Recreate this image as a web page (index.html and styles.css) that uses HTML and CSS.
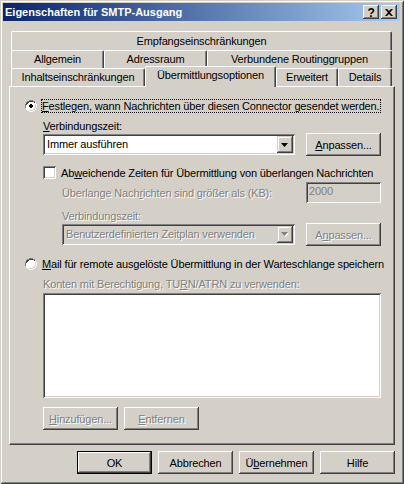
FILE: index.html
```html
<!DOCTYPE html>
<html>
<head>
<meta charset="utf-8">
<link rel="stylesheet" href="styles.css">
</head>
<body>
<div class="window">
  <div class="titlebar">
    <span class="title">Eigenschaften für SMTP-Ausgang</span>
    <div class="tb-btns">
      <span class="tb-btn help">?</span>
      <span class="tb-btn"><svg width="8" height="7" viewBox="0 0 8 7"><path d="M0 0h2l2 2 2-2h2L5 3.5 8 7H6L4 5 2 7H0l3-3.5z" fill="#000"/></svg></span>
    </div>
  </div>
  <div class="client">
    <div class="tabs">
      <div class="tabrow r1">
        <div class="tab w-empf">Empfangseinschränkungen</div>
      </div>
      <div class="tabrow">
        <div class="tab w-allg">Allgemein</div>
        <div class="tab w-adr">Adressraum</div>
        <div class="tab w-verb">Verbundene Routinggruppen</div>
      </div>
      <div class="tabrow">
        <div class="tab w-inh">Inhaltseinschränkungen</div>
        <div class="tab sel w-uebm">Übermittlungsoptionen</div>
        <div class="tab w-erw">Erweitert</div>
        <div class="tab w-det">Details</div>
      </div>
    </div>
    <div class="panel">
      <div class="optrow r-first">
        <span class="radio"><svg width="12" height="12" viewBox="0 0 12 12"><path d="M4 0h4v1h2v1h1v2h1v4h-1v2h-1v1H8v1H4v-1H2v-1H1V8H0V4h1V2h1V1h2z" fill="#fff"/><path d="M4 0h4v1h2v1h-2v-1h-4v1h-2v2h-1v4h-1v-4h1v-2h1v-1h2z" fill="#808080"/><path d="M4 1h4v1h2v1h-1v-1h-1v-0H4v1H3v1H2v1H1V3h1V2h2z" fill="#404040"/><path d="M11 4h1v4h-1v2h-1v1H8v1H4v-1h4v-1h2V8h1z" fill="#fff"/><path d="M10 4h1v4h-1v2H8v1H4v-1h4V9h1V8h1z" fill="#D4D0C8"/><rect x="5" y="4" width="2" height="4" fill="#000"/><rect x="4" y="5" width="4" height="2" fill="#000"/></svg></span>
        <span class="focus"><u>F</u>estlegen, wann Nachrichten über diesen Connector gesendet werden.</span>
      </div>
      <div class="group">
        <div class="lbl l-verb"><u>V</u>erbindungszeit:</div>
        <div class="fieldrow">
          <div class="combo c1">
            <span class="ctext">Immer ausführen</span>
            <span class="cbtn"><svg width="7" height="4" viewBox="0 0 7 4"><path d="M0 0h7L3.5 4z" fill="#000"/></svg></span>
          </div>
          <div class="btn"><span><u>A</u>npassen...</span></div>
        </div>
        <div class="chkrow">
          <span class="check"></span>
          <span>Ab<u>w</u>eichende Zeiten für Übermittlung von überlangen Nachrichten</span>
        </div>
        <div class="sub">
          <div class="fieldrow sizerow">
            <span class="dis grow">Überlange Nach<u>r</u>ichten sind größer als (KB):</span>
            <div class="edit">2000</div>
          </div>
          <div class="lbl dis l-verb2">Verbindungszeit:</div>
          <div class="fieldrow">
            <div class="combo c2 disabled">
              <span class="ctext dis">Benutzerdefinierten Zeitplan verwenden</span>
              <span class="cbtn"><svg width="8" height="5" viewBox="0 0 8 5"><path d="M1 1h7L4.5 5z" fill="#fff"/><path d="M0 0h7L3.5 4z" fill="#808080"/></svg></span>
            </div>
            <div class="btn"><span class="dis">A<u>n</u>passen...</span></div>
          </div>
        </div>
      </div>
      <div class="optrow r-second">
        <span class="radio"><svg width="12" height="12" viewBox="0 0 12 12"><path d="M4 0h4v1h2v1h1v2h1v4h-1v2h-1v1H8v1H4v-1H2v-1H1V8H0V4h1V2h1V1h2z" fill="#fff"/><path d="M4 0h4v1h2v1h-2v-1h-4v1h-2v2h-1v4h-1v-4h1v-2h1v-1h2z" fill="#808080"/><path d="M4 1h4v1h2v1h-1v-1h-1v-0H4v1H3v1H2v1H1V3h1V2h2z" fill="#404040"/><path d="M11 4h1v4h-1v2h-1v1H8v1H4v-1h4v-1h2V8h1z" fill="#fff"/><path d="M10 4h1v4h-1v2H8v1H4v-1h4V9h1V8h1z" fill="#D4D0C8"/></svg></span>
        <span class="nofocus"><u>M</u>ail für remote ausgelöste Übermittlung in der Warteschlange speichern</span>
      </div>
      <div class="group">
        <div class="lbl dis l-konten">Konten mit Berechtigung, TU<u>R</u>N/ATRN zu verwenden:</div>
        <div class="listbox"></div>
        <div class="btnrow">
          <div class="btn"><span class="dis"><u>H</u>inzufügen...</span></div>
          <div class="btn"><span class="dis"><u>E</u>ntfernen</span></div>
        </div>
      </div>
    </div>
    <div class="footer">
      <div class="btn default"><span>OK</span></div>
      <div class="btn"><span>Abbrechen</span></div>
      <div class="btn"><span>Ü<u>b</u>ernehmen</span></div>
      <div class="btn"><span>Hilfe</span></div>
    </div>
  </div>
</div>
</body>
</html>
```
FILE: styles.css
```css
* { box-sizing: border-box; }
html, body { margin: 0; padding: 0; }
body {
  font-family: "Liberation Sans", Arial, sans-serif;
  font-size: 11px;
  letter-spacing: -0.15px;
  color: #000;
  background: #D4D0C8;
}
u { text-decoration: underline; text-underline-offset: 1px; }

.window {
  width: 404px;
  height: 484px;
  background: #D4D0C8;
  padding: 3px 4px 4px 3px;
  box-shadow: inset 1px 1px #D4D0C8, inset -1px -1px #404040, inset 2px 2px #fff, inset -2px -2px #808080;
  display: flex;
  flex-direction: column;
}

.titlebar {
  height: 18px;
  background: linear-gradient(to right, #0A246A, #A6CAF0);
  display: flex;
  align-items: center;
  padding: 0 3px 0 2px;
}
.title {
  flex: 1;
  color: #fff;
  font-weight: bold;
  font-size: 11px;
  letter-spacing: 0;
  line-height: 14px;
}
.tb-btns { display: flex; gap: 2px; }
.tb-btn {
  width: 16px;
  height: 14px;
  background: #D4D0C8;
  box-shadow: inset -1px -1px #404040, inset 1px 1px #fff, inset -2px -2px #808080;
  display: flex;
  align-items: center;
  justify-content: center;
}
.tb-btn.help {
  font-weight: bold;
  font-size: 12px;
  line-height: 12px;
  padding-top: 1px;
}

.client {
  flex: 1;
  padding: 10px 5px 0 6px;
  display: flex;
  flex-direction: column;
}

.tabs { margin: 0 2px; }
.tabrow { display: flex; height: 18px; }
.tabrow.r1 { height: 19px; }
.tab {
  height: 18px;
  background: #D4D0C8;
  border-top: 1px solid #fff;
  border-left: 1px solid #fff;
  border-right: 1px solid #404040;
  border-radius: 2px 2px 0 0;
  box-shadow: inset -1px 0 #808080;
  text-align: center;
  line-height: 16px;
  white-space: nowrap;
}
.r1 .tab { height: 19px; padding-top: 1px; }
.tab.sel {
  position: relative;
  z-index: 1;
  height: 21px;
  margin-top: -2px;
}
.w-empf { width: 381px; }
.w-allg { width: 93px; }
.w-adr { width: 103px; }
.w-verb { width: 185px; }
.w-inh { width: 134px; }
.w-uebm { width: 131px; }
.w-erw { width: 62px; }
.w-det { width: 54px; }

.panel {
  height: 359px;
  border-top: 1px solid #fff;
  border-left: 1px solid #fff;
  border-right: 1px solid #404040;
  border-bottom: 1px solid #404040;
  box-shadow: inset -1px -1px #808080;
  padding: 12px 0 0 15px;
}

.optrow {
  display: flex;
  align-items: center;
  height: 14px;
}
.radio { width: 12px; height: 12px; display: block; }
.radio svg { display: block; }
.focus {
  margin-left: 4px;
  border: 1px dotted #000;
  padding: 0 1px 0 0;
  line-height: 12px;
  white-space: nowrap;
}
.nofocus {
  margin-left: 5px;
  line-height: 12px;
  white-space: nowrap;
}
.r-second { margin-top: 11px; }

.group { margin-left: 18px; }
.lbl { line-height: 13px; height: 13px; white-space: nowrap; }
.l-verb { margin-top: 7px; }
.l-verb2 { margin-top: 7px; }
.l-konten { margin-top: 7px; }

.fieldrow {
  display: flex;
  align-items: center;
  height: 23px;
  width: 338px;
}
.sizerow { height: 21px; margin-top: 3px; width: 319px; }
.grow { flex: 1; white-space: nowrap; }

.combo {
  height: 21px;
  background: #fff;
  box-shadow: inset 1px 1px #808080, inset -1px -1px #fff, inset 2px 2px #404040, inset -2px -2px #D4D0C8;
  display: flex;
  align-items: center;
  padding: 2px;
  margin-right: 11px;
}
.combo.c1 { width: 252px; }
.combo.c2 { width: 233px; }
.combo.disabled { background: #D4D0C8; }
.ctext { flex: 1; padding-left: 2px; white-space: nowrap; line-height: 13px; }
.cbtn {
  width: 16px;
  height: 17px;
  background: #D4D0C8;
  box-shadow: inset -1px -1px #404040, inset 1px 1px #D4D0C8, inset -2px -2px #808080, inset 2px 2px #fff;
  display: flex;
  align-items: center;
  justify-content: center;
}
.cbtn svg { display: block; margin-left: -1px; }

.btn {
  width: 75px;
  height: 23px;
  background: #D4D0C8;
  box-shadow: inset -1px -1px #404040, inset 1px 1px #fff, inset -2px -2px #808080, inset 2px 2px #D4D0C8;
  display: flex;
  align-items: center;
  justify-content: center;
  white-space: nowrap;
  flex: none;
}
.btn.default {
  border: 1px solid #000;
  box-shadow: inset -1px -1px #404040, inset 1px 1px #fff, inset -2px -2px #808080;
}

.dis { color: #808080; text-shadow: 1px 1px 0 #fff; }

.chkrow {
  display: flex;
  align-items: center;
  height: 13px;
  margin-top: 10px;
  white-space: nowrap;
}
.check {
  width: 13px;
  height: 13px;
  background: #fff;
  box-shadow: inset 1px 1px #808080, inset -1px -1px #fff, inset 2px 2px #404040, inset -2px -2px #D4D0C8;
  margin-right: 5px;
  flex: none;
}

.sub { margin-left: 19px; }
.edit {
  width: 75px;
  height: 21px;
  background: #D4D0C8;
  box-shadow: inset 1px 1px #808080, inset -1px -1px #fff, inset 2px 2px #404040, inset -2px -2px #D4D0C8;
  color: #808080;
  padding: 3px 0 0 3px;
  line-height: 13px;
  flex: none;
}

.listbox {
  margin-top: 2px;
  width: 338px;
  height: 105px;
  background: #fff;
  box-shadow: inset 1px 1px #808080, inset -1px -1px #fff, inset 2px 2px #404040, inset -2px -2px #D4D0C8;
}
.btnrow { display: flex; gap: 6px; margin-top: 9px; }

.footer {
  display: flex;
  justify-content: flex-end;
  gap: 6px;
  margin-top: 6px;
}
```
